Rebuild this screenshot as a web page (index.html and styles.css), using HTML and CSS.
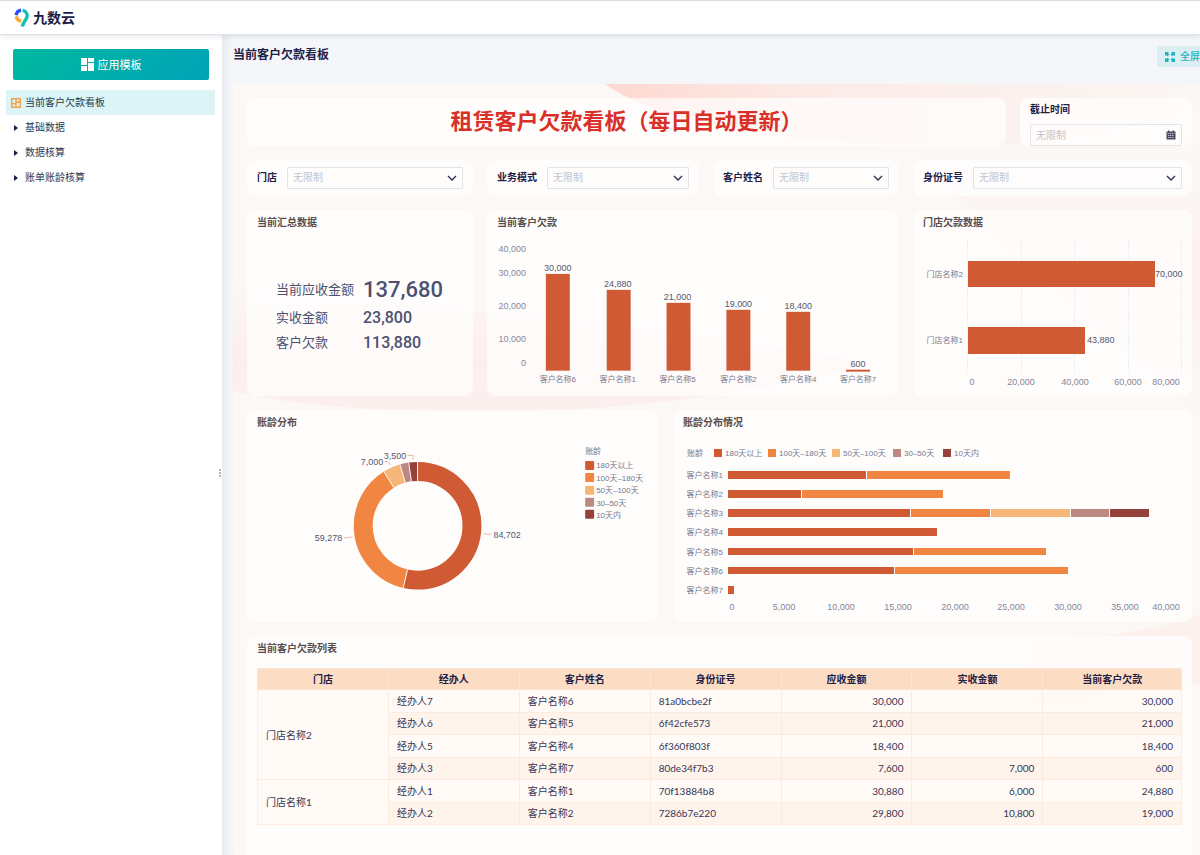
FILE: index.html
```html
<!DOCTYPE html>
<html lang="zh-CN">
<head>
<meta charset="utf-8">
<title>九数云 - 当前客户欠款看板</title>
<link rel="stylesheet" href="styles.css">
</head>
<body>
<header class="topbar">
  <svg class="logo-mark" viewBox="0 0 16 20" width="16" height="20" aria-hidden="true">
    <g fill="none" stroke-width="3.4">
      <path d="M2.2 7.2A5.6 5.6 0 0 1 7 2.3" stroke="#2b4dfb"/>
      <path d="M2.3 8.4A5.6 5.6 0 0 0 7.2 13" stroke="#fba92f"/>
      <path d="M8.6 2.3C12 3 13.6 5.6 13.1 8.6C12.6 11.800 9.300 13.500 8.300 18.500" stroke="#0fc1b7"/>
    </g>
  </svg>
  <span class="logo-text">九数云</span>
</header>

<div class="workspace">
  <aside class="sidebar">
    <button class="template-btn" type="button">
      <svg viewBox="0 0 13 13" width="13" height="13" fill="#fff" aria-hidden="true">
        <path d="M0 0h6v7H0zM7 0h6v4H7zM0 8h6v5H0zM7 5h6v8H7z"/>
      </svg>
      应用模板
    </button>
    <nav class="tree">
      <a class="tree-item tree-item-active" href="#board">
        <svg viewBox="0 0 10 10" width="10" height="10" fill="none" stroke="#f5a04c" stroke-width="1.400" aria-hidden="true">
          <path d="M.7.7h8.600v8.600H.7zM5 1v8M1 5.800H5M5 4.200h4"/>
        </svg>
        当前客户欠款看板
      </a>
      <a class="tree-item" href="#base"><span class="caret"></span>基础数据</a>
      <a class="tree-item" href="#calc"><span class="caret"></span>数据核算</a>
      <a class="tree-item" href="#aging"><span class="caret"></span>账单账龄核算</a>
    </nav>
    <div class="splitter"><i></i><i></i><i></i></div>
  </aside>

  <main class="main">
    <div class="page-head">
      <h1 class="page-title">当前客户欠款看板</h1>
      <button class="fullscreen-btn" type="button">
        <svg viewBox="0 0 10 10" width="10" height="10" fill="#1eb3bf" aria-hidden="true">
          <path d="M0 0h4L2.900 1.100 4.300 2.500 2.500 4.300 1.100 2.900 0 4zM10 0v4L8.900 2.900 7.500 4.300 5.700 2.500 7.100 1.100 6 0zM0 10V6l1.100 1.100L2.500 5.700l1.800 1.800-1.400 1.400L4 10zM10 10H6l1.100-1.100-1.400-1.400 1.800-1.800 1.400 1.400L10 6z"/>
        </svg>
        全屏
      </button>
    </div>

    <div class="board" id="board">
      <svg class="board-bg" viewBox="0 0 967 771" preserveAspectRatio="none" aria-hidden="true">
        <defs>
          <linearGradient id="ribbon" x1="0" y1="0" x2="1" y2="0">
            <stop offset="0" stop-color="#fed8d0"/>
            <stop offset=".3" stop-color="#fce9e5"/>
            <stop offset=".8" stop-color="#fbf3f0"/>
            <stop offset="1" stop-color="#fbf7f4"/>
          </linearGradient>
          <linearGradient id="bowl" x1="0" y1="0" x2="0" y2="1">
            <stop offset="0" stop-color="#fceeec" stop-opacity="0"/>
            <stop offset=".6" stop-color="#fceeec"/>
            <stop offset="1" stop-color="#fcf0ee"/>
          </linearGradient>
          <linearGradient id="edge" x1="0" y1="0" x2="0" y2="1">
            <stop offset="0" stop-color="#fcf1ee" stop-opacity="0"/>
            <stop offset=".5" stop-color="#fcf1ee"/>
            <stop offset="1" stop-color="#fcf1ee" stop-opacity="0"/>
          </linearGradient>
        </defs>
        <path d="M372 0C430 42 560 62 733 62C800 62 900 50 967 20V0Z" fill="url(#ribbon)"/>
        <path d="M0 200C150 225 400 230 640 280C560 300 400 332 220 328C130 326 50 320 0 307Z" fill="url(#bowl)"/>
        <path d="M800 557C860 555 920 548 967 530V600L800 620Z" fill="#fdf1ee"/>
        <path d="M680 60H967V330C880 260 760 160 680 60Z" fill="url(#edge)"/>
      </svg>

      <div class="row row-title">
        <section class="card banner"><h2>租赁客户欠款看板（每日自动更新）</h2></section>
        <section class="card date-card">
          <label for="deadline">截止时间</label>
          <div class="field">
            <input id="deadline" type="text" placeholder="无限制">
            <svg class="field-icon" viewBox="0 0 10 10" width="10" height="10" aria-hidden="true">
              <path d="M.5 1.500H2V.5h1.500v1h3v-1H8v1h1.500v8H.5z" fill="#4a4964"/>
              <path d="M1.500 3.600h7M2 5.500h6M2 7.500h6" stroke="#d9d9e0" stroke-width=".8" stroke-dasharray="1.400 .6"/>
            </svg>
          </div>
        </section>
      </div>

      <div class="row row-filters">
        <section class="card filter">
          <label for="f-store">门店</label>
          <div class="field">
            <select id="f-store"><option>无限制</option></select>
            <svg class="field-icon" viewBox="0 0 10 10" width="10" height="10"><path d="M1 3l4 4 4-4" class="chev"/></svg>
          </div>
        </section>
        <section class="card filter">
          <label for="f-mode">业务模式</label>
          <div class="field">
            <select id="f-mode"><option>无限制</option></select>
            <svg class="field-icon" viewBox="0 0 10 10" width="10" height="10"><path d="M1 3l4 4 4-4" class="chev"/></svg>
          </div>
        </section>
        <section class="card filter">
          <label for="f-name">客户姓名</label>
          <div class="field">
            <select id="f-name"><option>无限制</option></select>
            <svg class="field-icon" viewBox="0 0 10 10" width="10" height="10"><path d="M1 3l4 4 4-4" class="chev"/></svg>
          </div>
        </section>
        <section class="card filter">
          <label for="f-id">身份证号</label>
          <div class="field">
            <select id="f-id"><option>无限制</option></select>
            <svg class="field-icon" viewBox="0 0 10 10" width="10" height="10"><path d="M1 3l4 4 4-4" class="chev"/></svg>
          </div>
        </section>
      </div>

      <div class="row row-summary">
        <section class="card panel">
          <h3>当前汇总数据</h3>
          <dl class="kpis">
            <dt>当前应收金额</dt><dd class="kpi-main">137,680</dd>
            <dt>实收金额</dt><dd>23,800</dd>
            <dt>客户欠款</dt><dd>113,880</dd>
          </dl>
        </section>

        <section class="card panel">
          <h3>当前客户欠款</h3>
          <svg class="chart" viewBox="0 0 413 162">
            <g class="axis" text-anchor="end">
              <text x="39" y="18">40,000</text><text x="39" y="42">30,000</text><text x="39" y="75">20,000</text>
              <text x="39" y="108">10,000</text><text x="39" y="132">0</text>
            </g>
            <g class="c1">
              <rect x="59" y="40" width="24" height="97"/><rect x="120" y="56" width="24" height="81"/>
              <rect x="180" y="69" width="24" height="68"/><rect x="240" y="76" width="24" height="61"/>
              <rect x="300" y="78" width="24" height="59"/><rect x="360" y="136" width="24" height="2"/>
            </g>
            <g class="value" text-anchor="middle">
              <text x="71" y="37">30,000</text><text x="131" y="53">24,880</text><text x="191" y="66">21,000</text>
              <text x="252" y="73">19,000</text><text x="312" y="75">18,400</text><text x="372" y="133">600</text>
            </g>
            <g class="name" text-anchor="middle">
              <text x="71" y="148">客户名称6</text><text x="131" y="148">客户名称1</text><text x="191" y="148">客户名称5</text>
              <text x="252" y="148">客户名称2</text><text x="312" y="148">客户名称4</text><text x="372" y="148">客户名称7</text>
            </g>
          </svg>
        </section>

        <section class="card panel">
          <h3>门店欠款数据</h3>
          <svg class="chart" viewBox="0 0 279 162">
            <path class="grid-line" d="M54.500 6V139M108.500 6V139M161.500 6V139M215.500 6V139M268.500 6V139"/>
            <g class="c1"><rect x="55" y="27" width="187" height="26"/><rect x="55" y="93" width="117" height="27"/></g>
            <g class="name" text-anchor="end"><text x="50" y="43">门店名称2</text><text x="50" y="109">门店名称1</text></g>
            <g class="value"><text x="242" y="43">70,000</text><text x="174" y="109">43,880</text></g>
            <g class="axis" text-anchor="middle">
              <text x="59" y="151">0</text><text x="108" y="151">20,000</text><text x="162" y="151">40,000</text>
              <text x="215" y="151">60,000</text><text x="253" y="151">80,000</text>
            </g>
          </svg>
        </section>
      </div>

      <div class="row row-aging">
        <section class="card panel">
          <h3>账龄分布</h3>
          <svg class="chart" viewBox="0 0 413 188">
            <g class="ring" transform="rotate(-90 171 92)">
              <circle cx="171" cy="92" r="54.500" pathLength="157980" stroke="#cf5a34" stroke-dasharray="84702 157980"/>
              <circle cx="171" cy="92" r="54.500" pathLength="157980" stroke="#f08641" stroke-dasharray="59278 157980" stroke-dashoffset="-84702"/>
              <circle cx="171" cy="92" r="54.500" pathLength="157980" stroke="#f6b678" stroke-dasharray="7000 157980" stroke-dashoffset="-143980"/>
              <circle cx="171" cy="92" r="54.500" pathLength="157980" stroke="#bc8882" stroke-dasharray="3500 157980" stroke-dashoffset="-150980"/>
              <circle cx="171" cy="92" r="54.500" pathLength="157980" stroke="#96413c" stroke-dasharray="3500 157980" stroke-dashoffset="-154480"/>
            </g>
            <path class="ring-gap" d="M160.900 135.800L156.600 154.300M147.200 53.800L137.200 37.700M158.600 48.700L153.400 30.500M164.800 47.400L162.100 28.600M171 47V28"/>
            <path class="leader" d="M237 99.500L240 100.500H245M97 104H102L106 103M138 27.500H141L144 31M161 21.500H166.500V26"/>
            <g class="value">
              <text x="247" y="104">84,702</text><text x="68" y="107">59,278</text>
              <text x="114" y="31">7,000</text><text x="137" y="25">3,500</text>
            </g>
            <g class="name">
              <text x="339" y="20">账龄</text>
              <rect class="c1" x="339" y="27" width="9" height="9" rx="1"/><text x="350" y="34">180天以上</text>
              <rect class="c2" x="339" y="39" width="9" height="9" rx="1"/><text x="350" y="47">100天–180天</text>
              <rect class="c3" x="339" y="52" width="9" height="9" rx="1"/><text x="350" y="59">50天–100天</text>
              <rect class="c4" x="339" y="64" width="9" height="9" rx="1"/><text x="350" y="72">30–50天</text>
              <rect class="c5" x="339" y="76" width="9" height="9" rx="1"/><text x="350" y="84">10天内</text>
            </g>
          </svg>
        </section>

        <section class="card panel">
          <h3>账龄分布情况</h3>
          <svg class="chart" viewBox="0 0 519 188">
            <g class="name">
              <text x="14" y="22">账龄</text>
              <rect class="c1" x="41" y="15" width="8" height="8"/><text x="52" y="22">180天以上</text>
              <rect class="c2" x="95" y="15" width="8" height="8"/><text x="106" y="22">100天–180天</text>
              <rect class="c3" x="159" y="15" width="8" height="8"/><text x="170" y="22">50天–100天</text>
              <rect class="c4" x="220" y="15" width="8" height="8"/><text x="231" y="22">30–50天</text>
              <rect class="c5" x="270" y="15" width="8" height="8"/><text x="281" y="22">10天内</text>
            </g>
            <g class="name" text-anchor="end">
              <text x="50" y="44">客户名称1</text><text x="50" y="63">客户名称2</text><text x="50" y="82">客户名称3</text>
              <text x="50" y="101">客户名称4</text><text x="50" y="121">客户名称5</text><text x="50" y="140">客户名称6</text>
              <text x="50" y="159">客户名称7</text>
            </g>
            <g class="c1">
              <rect x="55" y="37" width="138" height="8"/><rect x="55" y="56" width="73" height="8"/>
              <rect x="55" y="75" width="182" height="8"/><rect x="55" y="94" width="209" height="8"/>
              <rect x="55" y="114" width="185" height="7"/><rect x="55" y="133" width="166" height="7"/>
              <rect x="55" y="152" width="6" height="8"/>
            </g>
            <g class="c2">
              <rect x="194" y="37" width="143" height="8"/><rect x="129" y="56" width="141" height="8"/>
              <rect x="238" y="75" width="79" height="8"/><rect x="241" y="114" width="132" height="7"/>
              <rect x="222" y="133" width="173" height="7"/>
            </g>
            <rect class="c3" x="318" y="75" width="79" height="8"/>
            <rect class="c4" x="398" y="75" width="38" height="8"/>
            <rect class="c5" x="437" y="75" width="39" height="8"/>
            <g class="axis" text-anchor="middle">
              <text x="59" y="176">0</text><text x="111" y="176">5,000</text><text x="168" y="176">10,000</text>
              <text x="225" y="176">15,000</text><text x="282" y="176">20,000</text><text x="338" y="176">25,000</text>
              <text x="395" y="176">30,000</text><text x="452" y="176">35,000</text><text x="493" y="176">40,000</text>
            </g>
          </svg>
        </section>
      </div>

      <section class="card panel table-card">
        <h3>当前客户欠款列表</h3>
        <table class="debt-table">
          <thead>
            <tr><th>门店</th><th>经办人</th><th>客户姓名</th><th>身份证号</th><th>应收金额</th><th>实收金额</th><th class="col-last">当前客户欠款</th></tr>
          </thead>
          <tbody>
            <tr><td rowspan="4" class="store">门店名称2</td><td>经办人7</td><td>客户名称6</td><td>81a0bcbe2f</td><td class="num">30,000</td><td class="num"></td><td class="num">30,000</td></tr>
            <tr><td>经办人6</td><td>客户名称5</td><td>6f42cfe573</td><td class="num">21,000</td><td class="num"></td><td class="num">21,000</td></tr>
            <tr><td>经办人5</td><td>客户名称4</td><td>6f360f803f</td><td class="num">18,400</td><td class="num"></td><td class="num">18,400</td></tr>
            <tr><td>经办人3</td><td>客户名称7</td><td>80de34f7b3</td><td class="num">7,600</td><td class="num">7,000</td><td class="num">600</td></tr>
            <tr><td rowspan="2" class="store">门店名称1</td><td>经办人1</td><td>客户名称1</td><td>70f13884b8</td><td class="num">30,880</td><td class="num">6,000</td><td class="num">24,880</td></tr>
            <tr><td>经办人2</td><td>客户名称2</td><td>7286b7e220</td><td class="num">29,800</td><td class="num">10,800</td><td class="num">19,000</td></tr>
          </tbody>
        </table>
      </section>
    </div>
  </main>
</div>
</body>
</html>
```
FILE: styles.css
```css
* { box-sizing: border-box; }

body {
  margin: 0;
  height: 100vh;
  display: flex;
  flex-direction: column;
  overflow: hidden;
  font-family: "Liberation Sans", "Noto Sans CJK SC", sans-serif;
  font-size: 10px;
  line-height: 14px;
  color: #1f2146;
  background: #fff;
}

h1, h2, h3, dl, dd { margin: 0; }

button, input, select { font: inherit; color: inherit; }

/* Top bar */
.topbar {
  display: flex;
  align-items: center;
  gap: 3px;
  height: 35px;
  flex: none;
  padding: 0 14px;
  border-top: 1px solid #dcdcdd;
  border-bottom: 1px solid #e2e3e8;
  box-shadow: 0 1px 6px rgba(40, 50, 90, .14);
  position: relative;
  z-index: 2;
  background: #fff;
}

.logo-text {
  font-size: 14px;
  line-height: 20px;
  font-weight: 700;
  color: #1b1c44;
}

.workspace {
  flex: 1;
  min-height: 0;
  display: flex;
}

/* Sidebar */
.sidebar {
  position: relative;
  width: 222px;
  flex: none;
  padding: 14px 7px 0 6px;
}

.template-btn {
  display: flex;
  align-items: center;
  justify-content: center;
  gap: 4px;
  width: 196px;
  height: 31px;
  margin: 0 0 10px 7px;
  border: 0;
  border-radius: 2px;
  font-size: 11px;
  color: #fff;
  background: linear-gradient(135deg, #00b99f, #00a3b8);
}

.tree-item {
  display: flex;
  align-items: center;
  gap: 4px;
  height: 25px;
  padding-left: 5px;
  color: #33384f;
  text-decoration: none;
}

.tree-item-active { background: #dcf4f5; color: #2a3a48; }

.caret {
  width: 10px;
  height: 6px;
  border-left: 4px solid #1b1c44;
  border-top: 3px solid transparent;
  border-bottom: 3px solid transparent;
  margin-left: 3px;
  margin-right: -3px;
}

.splitter {
  position: absolute;
  right: 1px;
  top: 434px;
  display: grid;
  gap: 1px;
}

.splitter i { width: 2px; height: 2px; background: #b3b3be; }

/* Main column */
.main {
  flex: 1;
  min-width: 0;
  display: flex;
  flex-direction: column;
  padding-left: 11px;
  background: linear-gradient(90deg, #e9edf3, #f4f6f9 11px);
}

.page-head {
  display: flex;
  justify-content: space-between;
  align-items: flex-start;
  flex: none;
  height: 49px;
  padding-top: 11px;
}

.page-title {
  font-size: 12px;
  line-height: 18px;
  font-weight: 700;
}

.fullscreen-btn {
  display: flex;
  align-items: center;
  gap: 5px;
  height: 21px;
  padding: 0 0 0 8px;
  border: 0;
  border-radius: 2px 0 0 2px;
  background: #dbeff3;
  color: #1eb3bf;
  font-weight: 500;
}

/* Dashboard */
.board {
  position: relative;
  flex: 1;
  min-height: 0;
  display: flex;
  flex-direction: column;
  gap: 14px;
  padding: 14px 8px 0 14px;
  background: #fbf8f6;
}

.board-bg {
  position: absolute;
  inset: 0;
  width: 100%;
  height: 100%;
}

.row { display: grid; gap: 14px; position: relative; }
.row-title { grid-template-columns: 759fr 172fr; }
.row-filters { grid-template-columns: 226fr 212fr 186fr 279fr; }
.row-summary { grid-template-columns: 226fr 412fr 279fr; }
.row-aging { grid-template-columns: 412fr 519fr; }

.card {
  min-width: 0;
  border-radius: 8px;
  background: rgba(255, 255, 255, .68);
}

.banner {
  display: flex;
  align-items: center;
  justify-content: center;
}

.banner h2 {
  font-size: 22px;
  line-height: 32px;
  font-weight: 700;
  color: #d93029;
}

label { font-weight: 700; flex: none; }

.date-card { padding: 5px 10px 0; }
.date-card label { display: block; line-height: 14px; margin-bottom: 7px; }

.filter {
  display: flex;
  align-items: center;
  gap: 10px;
  height: 36px;
  padding: 0 10px;
}

.field { position: relative; flex: 1; min-width: 0; }

.field input,
.field select {
  display: block;
  width: 100%;
  height: 22px;
  padding: 0 20px 0 5px;
  border: 1px solid #e3e3e8;
  border-radius: 1px;
  appearance: none;
  background: transparent;
  color: #c3c3cb;
}

.field input::placeholder { color: #c3c3cb; }

.field-icon {
  position: absolute;
  right: 6px;
  top: 6px;
  pointer-events: none;
}

.chev { fill: none; stroke: #2c2d52; stroke-width: 1.3; }

.panel h3 {
  height: 24px;
  padding-left: 10px;
  font-size: 10px;
  line-height: 26px;
  font-weight: 700;
  color: #5a4c4b;
}

.kpis {
  display: grid;
  grid-template-columns: 87px 1fr;
  grid-template-rows: 30px 26px 24px;
  align-items: center;
  padding: 41px 0 0 29px;
  color: #4d5070;
}

.kpis dt { font-size: 13px; line-height: 20px; }
.kpis dd { font-family: Roboto, sans-serif; font-size: 16px; line-height: 20px; font-weight: 500; }
.kpis .kpi-main { font-size: 22px; line-height: 28px; }

/* Charts */
.chart { display: block; width: 100%; height: auto; }
.axis { font-size: 9px; fill: #85869a; }
.value { font-size: 9px; fill: #55576f; }
.name { font-size: 8px; fill: #77788d; }
.c1 { fill: #cf5a34; }
.c2 { fill: #f08641; }
.c3 { fill: #f6b678; }
.c4 { fill: #bc8882; }
.c5 { fill: #96413c; }
.grid-line { stroke: #ededf0; stroke-dasharray: 2 1; fill: none; }
.ring { fill: none; stroke-width: 19; }
.ring-gap { stroke: #fdf3ee; fill: none; }
.leader { stroke: #f0b8a5; fill: none; }

/* Table */
.table-card {
  position: relative;
  flex: 1;
  border-radius: 8px 8px 0 0;
  padding-right: 10px;
}

.debt-table {
  width: calc(100% - 10px);
  height: 157px;
  margin: 8px 0 0 10px;
  border-collapse: collapse;
  table-layout: fixed;
  font-family: Lato, "Noto Sans CJK SC", sans-serif;
  line-height: 14px;
}

.debt-table th {
  height: 21px;
  padding: 0;
  border: 1px solid #fce5d5;
  background: #fddcc4;
  font-weight: 700;
}

.debt-table .col-last { width: 15%; }

.debt-table td {
  height: 22px;
  padding: 0 8px;
  border: 1px solid #fdebdf;
  background: rgba(255, 247, 240, .5);
  color: #34365a;
}

.debt-table tr:nth-child(even) td { background: rgba(254, 240, 230, .75); }
.debt-table .num { text-align: right; }
```
